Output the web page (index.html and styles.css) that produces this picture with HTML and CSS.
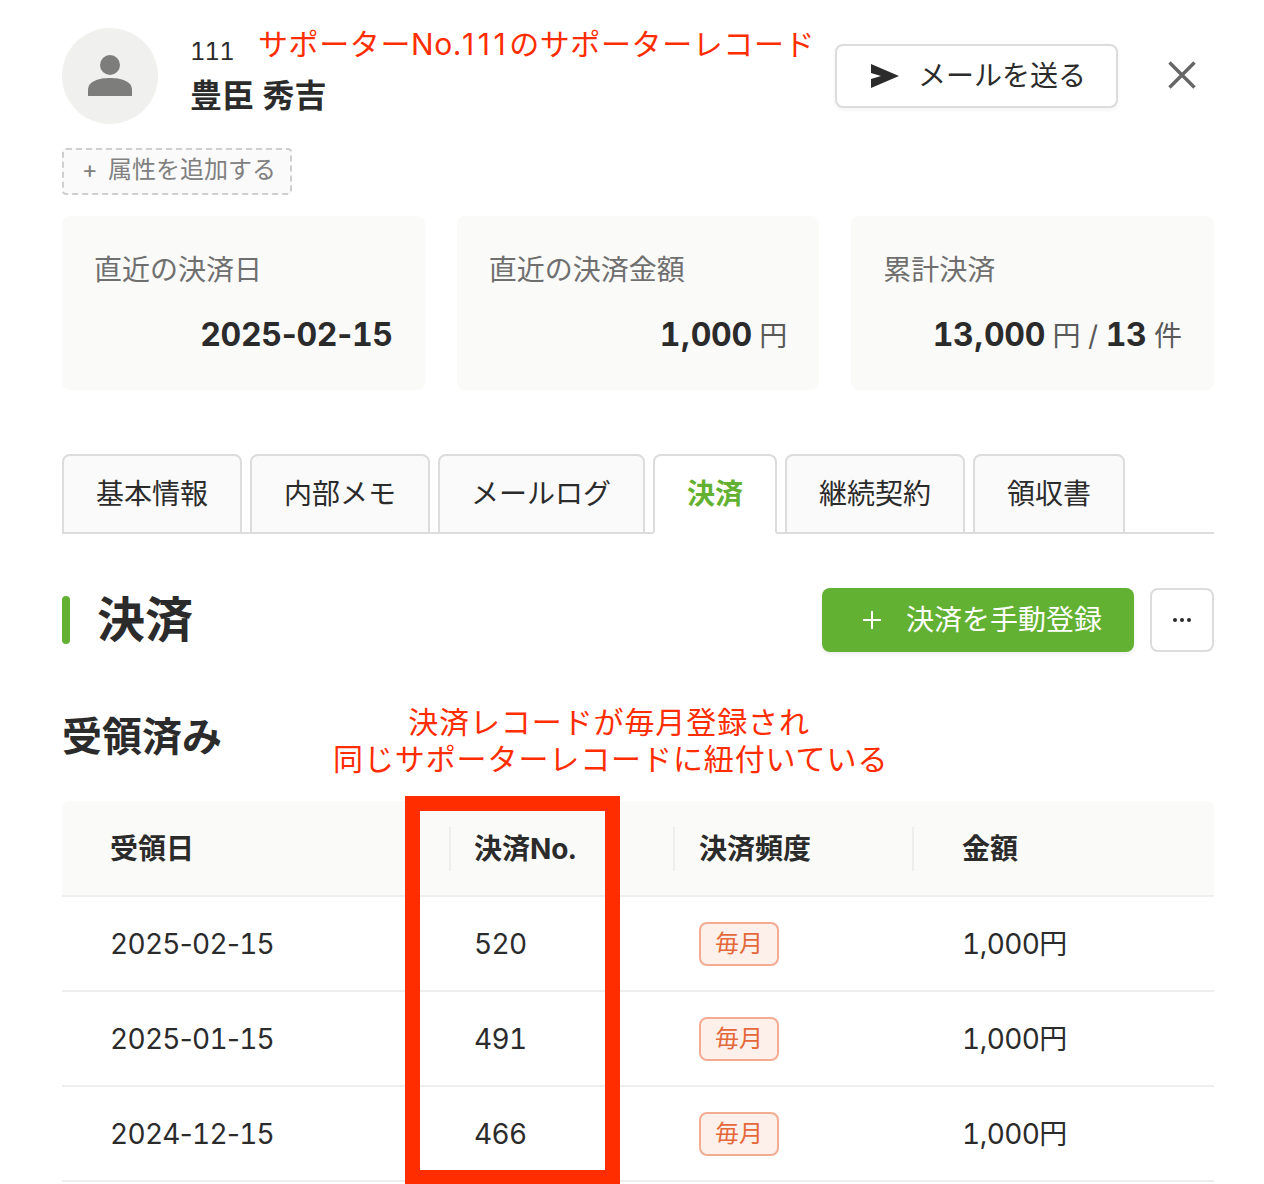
FILE: index.html
```html
<!DOCTYPE html>
<html lang="ja">
<head>
<meta charset="utf-8">
<title>サポーターレコード</title>
<link rel="stylesheet" href="styles.css">
</head>
<body>
<div class="page">
  <header class="header">
    <div class="avatar">
      <svg width="44" height="44" viewBox="0 0 44 44"><circle cx="22" cy="11" r="10" fill="#7d7d7b"/><path d="M0 42V36C0 27 11 24 22 24S44 27 44 36V42Z" fill="#7d7d7b"/></svg>
    </div>
    <div class="identity">
      <div class="identity-id">111</div>
      <div class="identity-name">豊臣 秀吉</div>
    </div>
    <button class="mail-btn">
      <svg width="28" height="24" viewBox="0 0 28 24"><path d="M0 0L28 12L0 24V15L10 12L0 9Z" fill="#2b2b2b"/></svg>
      <span>メールを送る</span>
    </button>
    <button class="close-btn" aria-label="閉じる">
      <svg width="28" height="28" viewBox="0 0 28 28"><path d="M1.5 1.5L26.5 26.5M26.5 1.5L1.5 26.5" stroke="#666" stroke-width="3.4" fill="none"/></svg>
    </button>
  </header>

  <button class="attr-chip"><span class="attr-plus">+</span>属性を追加する</button>

  <section class="stats">
    <div class="stat">
      <div class="stat-label">直近の決済日</div>
      <div class="stat-value"><b>2025<span class="sep">-</span>02<span class="sep">-</span>15</b></div>
    </div>
    <div class="stat">
      <div class="stat-label">直近の決済金額</div>
      <div class="stat-value"><b>1<span class="sep">,</span>000</b> 円</div>
    </div>
    <div class="stat">
      <div class="stat-label">累計決済</div>
      <div class="stat-value"><b>13<span class="sep">,</span>000</b> 円 / <b>13</b> 件</div>
    </div>
  </section>

  <nav class="tabs">
    <a class="tab">基本情報</a>
    <a class="tab">内部メモ</a>
    <a class="tab tab-log">メールログ</a>
    <a class="tab tab-active">決済</a>
    <a class="tab">継続契約</a>
    <a class="tab">領収書</a>
  </nav>

  <div class="section-head">
    <span class="section-bar"></span>
    <h1 class="section-title">決済</h1>
    <button class="add-btn">
      <svg width="20" height="20" viewBox="0 0 20 20"><path d="M10 1V19M1 10H19" stroke="#fff" stroke-width="2" fill="none"/></svg>
      <span>決済を手動登録</span>
    </button>
    <button class="more-btn" aria-label="その他">
      <svg width="20" height="6" viewBox="0 0 20 6"><circle cx="3" cy="3" r="2" fill="#2b2b2b"/><circle cx="10" cy="3" r="2" fill="#2b2b2b"/><circle cx="17" cy="3" r="2" fill="#2b2b2b"/></svg>
    </button>
  </div>

  <h2 class="sub-title">受領済み</h2>

  <table class="records">
    <colgroup>
      <col class="col-date"><col class="col-no"><col class="col-freq"><col class="col-amount">
    </colgroup>
    <thead>
      <tr>
        <th class="cell-first">受領日</th>
        <th class="cell-no"><span class="th-sep"></span>決済No.</th>
        <th><span class="th-sep"></span>決済頻度</th>
        <th class="cell-last"><span class="th-sep"></span>金額</th>
      </tr>
    </thead>
    <tbody>
      <tr><td class="cell-first">2025<span class="sep">-</span>02<span class="sep">-</span>15</td><td class="cell-no">520</td><td><span class="badge">毎月</span></td><td class="cell-last">1<span class="sep">,</span>000円</td></tr>
      <tr><td class="cell-first">2025<span class="sep">-</span>01<span class="sep">-</span>15</td><td class="cell-no">491</td><td><span class="badge">毎月</span></td><td class="cell-last">1<span class="sep">,</span>000円</td></tr>
      <tr><td class="cell-first">2024<span class="sep">-</span>12<span class="sep">-</span>15</td><td class="cell-no">466</td><td><span class="badge">毎月</span></td><td class="cell-last">1<span class="sep">,</span>000円</td></tr>
    </tbody>
  </table>
</div>

<div class="note note-top">サポーターNo.<span class="note-digits">111</span>のサポーターレコード</div>
<div class="note note-mid">決済レコードが毎月登録され<br>同じサポーターレコードに紐付いている</div>
<div class="red-box"></div>
</body>
</html>
```

FILE: styles.css
```css
* { box-sizing: border-box; }
html, body { margin: 0; height: 1184px; overflow: hidden; background: #fff; }
body {
  position: relative;
  font-family: Inter, "Noto Sans CJK JP", sans-serif;
  font-variant-numeric: tabular-nums;
  color: #2b2b2b;
  font-size: 28px;
}
button { font-family: inherit; font-variant-numeric: inherit; cursor: pointer; }
.sep { font-variant-numeric: normal; }
.page { padding: 28px 50px 0 62px; }

.header { display: flex; align-items: flex-start; height: 96px; }
.avatar {
  width: 96px; height: 96px; border-radius: 50%; background: #f0f0ee;
  display: flex; align-items: center; justify-content: center; flex: none;
}
.identity { margin-left: 32px; flex: 1; }
.identity-id { font-size: 24px; line-height: 32px; margin-top: 8px; letter-spacing: -1px; }
.identity-name { font-size: 32px; line-height: 48px; font-weight: 700; margin-top: 4px; }
.mail-btn {
  width: 283px; height: 64px; margin-top: 16px; padding: 0 0 0 34px;
  display: flex; align-items: center; gap: 19px;
  background: #fff; border: 2px solid #dcdcdc; border-radius: 8px;
  box-shadow: 0 2px 4px rgba(0,0,0,.05);
  font-size: 28px; line-height: 40px; color: #2b2b2b;
}
.close-btn {
  width: 28px; height: 28px; padding: 0; margin: 33px 18px 0 50px;
  border: 0; background: none; display: block;
}
.close-btn svg { display: block; }

.attr-chip {
  display: block; width: 230px; height: 47px; margin-top: 24px; padding: 0 0 4px 18px;
  background: #fafafa; border: 2px dashed #cfcfcf; border-radius: 4px;
  color: #808080; font-size: 24px; line-height: 38px; text-align: left;
}
.attr-plus { display: inline-block; width: 26px; }

.stats { display: flex; gap: 32px; margin-top: 21px; }
.stat {
  flex: 1; height: 174px; padding: 32px 32px 0; background: #fafaf8; border-radius: 8px;
}
.stat-label { font-size: 28px; line-height: 44px; color: #6f6f6f; }
.stat-value { margin-top: 21px; line-height: 44px; text-align: right; color: #5a5a5a; }
.stat-value b { font-size: 32px; color: #2b2b2b; letter-spacing: -.3px; }

.tabs {
  display: flex; gap: 8px; margin-top: 64px; height: 80px;
  border-bottom: 2px solid #dcdcdc;
}
.tab {
  height: 80px; padding: 0 32px 4px; display: flex; align-items: center;
  background: #fafafa; border: 2px solid #dcdcdc; border-radius: 8px 8px 0 0;
  font-size: 28px;
}
.tab-log { padding-left: 31px; }
.tab-active {
  background: #fff; border-bottom-color: #fff; color: #63b132; font-weight: 700;
}

.section-head { display: flex; align-items: center; margin-top: 54px; height: 64px; }
.section-bar { width: 8px; height: 48px; border-radius: 4px; background: #63b132; flex: none; }
.section-title {
  flex: 1; margin: 0 0 0 27px; font-size: 48px; line-height: 48px; font-weight: 700;
}
.add-btn {
  width: 312px; height: 64px; padding: 0 0 0 40px; border: 0; border-radius: 8px;
  background: #63b132; color: #fff; font-size: 28px; line-height: 40px;
  box-shadow: 0 2px 4px rgba(0,0,0,.08);
  display: flex; align-items: center; gap: 24px;
}
.more-btn {
  width: 64px; height: 64px; margin-left: 16px; padding: 0;
  background: #fff; border: 2px solid #dcdcdc; border-radius: 8px;
  display: flex; align-items: center; justify-content: center;
}

.sub-title { margin: 60px 0 39px; font-size: 40px; line-height: 50px; font-weight: 700; }

.records { width: 100%; table-layout: fixed; border-collapse: collapse; }
.col-date { width: 388px; }
.col-no { width: 224px; }
.col-freq { width: 239px; }
.records th {
  position: relative; height: 95px; padding: 2px 0 0 25px; text-align: left;
  background: #fafaf8; font-size: 28px; line-height: 40px; font-weight: 700;
  border-bottom: 2px solid #eeeeec;
}
.records th.cell-first { padding-left: 48px; border-radius: 8px 0 0 0; }
.records th.cell-no { padding-left: 24px; }
.records th.cell-last { padding-left: 49px; border-radius: 0 8px 0 0; }
.th-sep {
  position: absolute; left: -1px; top: 26px; height: 44px; width: 2px; background: #eeeeec;
}
.records td {
  height: 95px; padding: 0 0 0 25px; font-size: 28px; line-height: 40px; letter-spacing: -.7px;
  border-bottom: 2px solid #eeeeec;
}
.records td.cell-first { padding-left: 48px; }
.records td.cell-no { padding-left: 24px; }
.records td.cell-last { padding-left: 49px; }
.badge {
  display: inline-block; width: 80px; height: 44px; vertical-align: middle;
  background: #fdf0ea; border: 2px solid #f3ac92; border-radius: 8px;
  color: #e4683a; font-size: 24px; line-height: 40px; text-align: center; letter-spacing: 0;
}

.note {
  position: absolute; color: #ff2d00;
  font-size: 30px; line-height: 37px; white-space: nowrap; text-align: center; letter-spacing: .9px;
  font-variant-numeric: normal;
}
.note-top { left: 258px; top: 26px; letter-spacing: .6px; }
.note-digits { letter-spacing: 3.5px; }
.note-mid { left: 333px; width: 552px; top: 704px; }
.red-box {
  position: absolute; left: 405px; top: 796px; width: 215px; height: 389px;
  border: 15px solid #ff2d00;
}
```
